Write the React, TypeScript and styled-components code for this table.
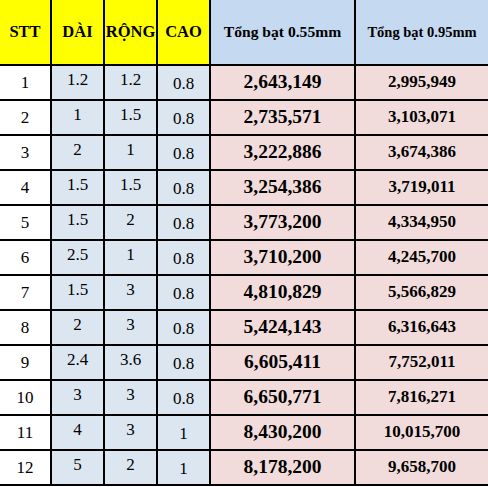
import styled, { createGlobalStyle } from 'styled-components';

const GlobalStyle = createGlobalStyle`
  html, body {
    margin: 0;
    padding: 0;
    background: #ffffff;
  }
  body {
    font-family: 'Liberation Serif', 'Times New Roman', serif;
    color: #000000;
  }
`;

interface Row {
  stt: number;
  dai: string;
  rong: string;
  cao: string;
  p55: string;
  p95: string;
}

const ROWS: Row[] = [
  { stt: 1, dai: '1.2', rong: '1.2', cao: '0.8', p55: '2,643,149', p95: '2,995,949' },
  { stt: 2, dai: '1', rong: '1.5', cao: '0.8', p55: '2,735,571', p95: '3,103,071' },
  { stt: 3, dai: '2', rong: '1', cao: '0.8', p55: '3,222,886', p95: '3,674,386' },
  { stt: 4, dai: '1.5', rong: '1.5', cao: '0.8', p55: '3,254,386', p95: '3,719,011' },
  { stt: 5, dai: '1.5', rong: '2', cao: '0.8', p55: '3,773,200', p95: '4,334,950' },
  { stt: 6, dai: '2.5', rong: '1', cao: '0.8', p55: '3,710,200', p95: '4,245,700' },
  { stt: 7, dai: '1.5', rong: '3', cao: '0.8', p55: '4,810,829', p95: '5,566,829' },
  { stt: 8, dai: '2', rong: '3', cao: '0.8', p55: '5,424,143', p95: '6,316,643' },
  { stt: 9, dai: '2.4', rong: '3.6', cao: '0.8', p55: '6,605,411', p95: '7,752,011' },
  { stt: 10, dai: '3', rong: '3', cao: '0.8', p55: '6,650,771', p95: '7,816,271' },
  { stt: 11, dai: '4', rong: '3', cao: '1', p55: '8,430,200', p95: '10,015,700' },
  { stt: 12, dai: '5', rong: '2', cao: '1', p55: '8,178,200', p95: '9,658,700' },
];

export default function App() {
  return (
    <>
      <GlobalStyle />
      <Table>
        <HeadCell $bg="#ffff00">STT</HeadCell>
        <HeadCell $bg="#ffff00">DÀI</HeadCell>
        <HeadCell $bg="#ffff00">RỘNG</HeadCell>
        <HeadCell $bg="#ffff00">CAO</HeadCell>
        <HeadCell $bg="#c5d9f1" $size={15.6}>
          Tổng bạt 0.55mm
        </HeadCell>
        <HeadCell $bg="#c5d9f1" $size={14.5} $last>
          Tổng bạt 0.95mm
        </HeadCell>
        {ROWS.map((row) => (
          <Line key={row.stt}>
            <Cell $bg="#ffffff">{row.stt}</Cell>
            <Cell $bg="#dce6f1" $raise>
              {row.dai}
            </Cell>
            <Cell $bg="#dce6f1" $raise>
              {row.rong}
            </Cell>
            <Cell $bg="#dce6f1" $drop>
              {row.cao}
            </Cell>
            <Price $size={19.5}>{row.p55}</Price>
            <Price $size={17} $last>
              {row.p95}
            </Price>
          </Line>
        ))}
      </Table>
    </>
  );
}

const Table = styled.div`
  display: grid;
  grid-template-columns: 52px 53px 53px 53px 145px 1fr;
  grid-template-rows: 66px;
  grid-auto-rows: 35px;
  width: 488px;
`;

const Line = styled.div`
  display: contents;
`;

const BaseCell = styled.div<{ $bg?: string; $last?: boolean }>`
  box-sizing: border-box;
  display: flex;
  align-items: center;
  justify-content: center;
  background: ${(p) => p.$bg ?? '#ffffff'};
  border-bottom: 2px solid #000000;
  border-right: ${(p) => (p.$last ? 'none' : '2px solid #000000')};
  white-space: nowrap;
`;

const HeadCell = styled(BaseCell)<{ $size?: number }>`
  font-size: ${(p) => p.$size ?? 16.5}px;
  font-weight: 700;
`;

const Cell = styled(BaseCell)<{ $raise?: boolean; $drop?: boolean }>`
  font-size: 17px;
  padding-bottom: ${(p) => (p.$raise ? 6 : 0)}px;
  padding-top: ${(p) => (p.$drop ? 2 : 0)}px;
`;

const Price = styled(BaseCell)<{ $size: number }>`
  background: #f2dcdb;
  font-size: ${(p) => p.$size}px;
  font-weight: 700;
  padding-bottom: 2px;
`;
